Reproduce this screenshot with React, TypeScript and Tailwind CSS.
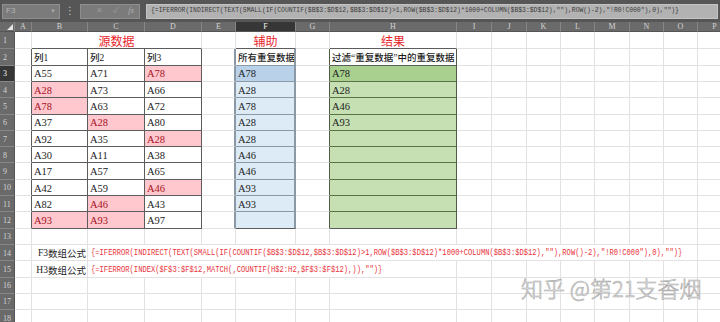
import React from 'react';

const COLS = ['A', 'B', 'C', 'D', 'E', 'F', 'G', 'H', 'I', 'J', 'K', 'L', 'M', 'N', 'O', 'P'];

const DATA: Record<string, string> = {
  B2: '列1', C2: '列2', D2: '列3', F2: '所有重复数据', H2: '过滤“重复数据”中的重复数据',
  B3: 'A55', C3: 'A71', D3: 'A78',
  B4: 'A28', C4: 'A73', D4: 'A66',
  B5: 'A78', C5: 'A63', D5: 'A72',
  B6: 'A37', C6: 'A28', D6: 'A80',
  B7: 'A92', C7: 'A35', D7: 'A28',
  B8: 'A30', C8: 'A11', D8: 'A38',
  B9: 'A17', C9: 'A57', D9: 'A65',
  B10: 'A42', C10: 'A59', D10: 'A46',
  B11: 'A82', C11: 'A46', D11: 'A43',
  B12: 'A93', C12: 'A93', D12: 'A97',
  F3: 'A78', F4: 'A28', F5: 'A78', F6: 'A28', F7: 'A28', F8: 'A46', F9: 'A46', F10: 'A93', F11: 'A93',
  H3: 'A78', H4: 'A28', H5: 'A46', H6: 'A93',
};

const PINK = new Set(['D3', 'B4', 'B5', 'C6', 'D7', 'D10', 'C11', 'B12', 'C12']);

const R_LIGHT = 'border-r border-r-[#e2e2e2]';
const R_DARK = 'border-r border-r-[#5c5c5c]';
const R_BLUE = 'border-r-2 border-r-[#8b98a6]';
const R_GREEN = 'border-r border-r-[#4f5b45]';
const B_LIGHT = 'border-b border-b-[#e2e2e2]';
const B_DARK = 'border-b border-b-[#5c5c5c]';
const B_BLUE = 'border-b border-b-[#8b98a6]';
const B_GREEN = 'border-b border-b-[#5b7146]';

const F3_FORMULA =
  '{=IFERROR(INDIRECT(TEXT(SMALL(IF(COUNTIF($B$3:$D$12,$B$3:$D$12)>1,ROW($B$3:$D$12)*1000+COLUMN($B$3:$D$12),""),ROW()-2),"!R0!C000"),0),"")}';
const H3_FORMULA = '{=IFERROR(INDEX($F$3:$F$12,MATCH(,COUNTIF(H$2:H2,$F$3:$F$12),)),"")}';

function inRows(r: number) {
  return r >= 2 && r <= 12;
}

function rightCls(r: number, c: number) {
  if (inRows(r)) {
    if (c >= 1 && c <= 3) return R_DARK;
    if (c === 0) return R_DARK;
    if (c === 4 || c === 5) return R_BLUE;
    if (c === 6 || c === 7) return R_GREEN;
  }
  return R_LIGHT;
}

function bottomCls(r: number, c: number) {
  if (r === 1) {
    if (c >= 1 && c <= 3) return B_DARK;
    if (c === 5) return B_DARK;
    if (c === 7) return B_DARK;
  }
  if (inRows(r)) {
    if (c >= 1 && c <= 3) return B_DARK;
    if (c === 5) return r === 12 ? B_DARK : B_BLUE;
    if (c === 7) return r === 2 || r === 12 ? B_DARK : B_GREEN;
  }
  return B_LIGHT;
}

function fillCls(r: number, c: number) {
  const id = COLS[c] + r;
  if (PINK.has(id)) return 'bg-[#ffc7ce] text-[#a5121d]';
  if (c === 5 && r === 3) return 'bg-[#b9d2ea] text-[#1c1c1c]';
  if (c === 5 && r >= 4 && r <= 12) return 'bg-[#ddebf7] text-[#1c1c1c]';
  if (c === 7 && r === 3) return 'bg-[#a9d08e] text-[#1c1c1c]';
  if (c === 7 && r >= 4 && r <= 12) return 'bg-[#c6e0b4] text-[#1c1c1c]';
  return 'bg-white text-[#1c1c1c]';
}

const CELL_FONT = "font-['Liberation_Serif','Noto_Sans_CJK_SC',serif]";

function Cell({ r, c }: { r: number; c: number }) {
  const id = COLS[c] + r;
  const text = DATA[id];
  const isHead = r === 2;
  return (
    <div
      className={`${rightCls(r, c)} ${bottomCls(r, c)} ${fillCls(r, c)} flex items-center overflow-hidden whitespace-nowrap pl-[2px] pt-[2px] ${CELL_FONT} ${
        isHead ? 'text-[9.5px] font-medium' : 'text-[10.5px]'
      }`}
    >
      {text}
    </div>
  );
}

function Title({ text, span }: { text: string; span: string }) {
  return (
    <div
      className={`${span} ${R_LIGHT} ${B_DARK} bg-white flex items-center justify-center pt-[1px] font-['Noto_Sans_CJK_SC',sans-serif] text-[12px] text-[#e8262b]`}
    >
      {text}
    </div>
  );
}

export default function App() {
  const cells: React.ReactNode[] = [];

  cells.push(
    <div key="corner" className="bg-[#6a6a6a] border-r border-r-[#858585] border-b border-b-[#555] flex items-end justify-end p-[1px]">
      <div className="w-0 h-0 border-l-[6px] border-l-transparent border-b-[6px] border-b-[#e6e6e6]" />
    </div>
  );
  COLS.forEach((col, i) => {
    cells.push(
      <div
        key={'h' + col}
        className={`${
          i === 5 ? 'bg-[#363636] text-[#f0f0f0]' : 'bg-[#6a6a6a] text-[#d4d4d4]'
        } border-r border-r-[#868686] border-b border-b-[#555] flex items-center justify-center font-['Liberation_Serif',serif] text-[8px] leading-none`}
      >
        {col}
      </div>
    );
  });

  for (let r = 1; r <= 18; r++) {
    cells.push(
      <div
        key={'r' + r}
        className={`${
          r === 3 ? 'bg-[#363636] text-[#f4f4f4]' : 'bg-[#6a6a6a] text-[#d4d4d4]'
        } border-r border-r-[#555] border-b border-b-[#868686] flex items-center pl-[3px] pt-[2px] font-['Liberation_Serif',serif] text-[8px] leading-none`}
      >
        {r}
      </div>
    );
    if (r === 1) {
      cells.push(<div key="A1" className={`${R_LIGHT} ${B_LIGHT}`} />);
      cells.push(<Title key="B1" text="源数据" span="col-span-3" />);
      cells.push(<div key="E1" className={`${R_LIGHT} ${B_LIGHT}`} />);
      cells.push(<Title key="F1" text="辅助" span="" />);
      cells.push(<div key="G1" className={`${R_LIGHT} ${B_LIGHT}`} />);
      cells.push(<Title key="H1" text="结果" span="" />);
      for (let c = 8; c < COLS.length; c++) cells.push(<div key={COLS[c] + r} className={`${R_LIGHT} ${B_LIGHT}`} />);
      continue;
    }
    if (r === 14 || r === 15) {
      const label = r === 14 ? 'F3' : 'H3';
      const formula = r === 14 ? F3_FORMULA : H3_FORMULA;
      cells.push(<div key={'A' + r} className={`${R_LIGHT} ${B_LIGHT}`} />);
      cells.push(
        <div
          key={'B' + r}
          className={`${R_LIGHT} ${B_LIGHT} flex items-center justify-end pr-[1px] pt-[2px] whitespace-nowrap text-[9.5px] text-[#1c1c1c] ${CELL_FONT}`}
        >
          <span className="font-['Liberation_Serif',serif]">{label}</span>
          <span className="font-['Noto_Sans_CJK_SC',sans-serif]">数组公式</span>
        </div>
      );
      cells.push(
        <div
          key={'C' + r}
          className={`${r === 14 ? 'col-span-13' : 'col-span-6'} ${R_LIGHT} ${B_LIGHT} flex items-center pl-[3px] pt-[2px] whitespace-nowrap`}
        >
          <div className="origin-left scale-x-[0.84] font-['Liberation_Mono',monospace] text-[8.5px] text-[#e8333a] leading-none">
            {formula}
          </div>
        </div>
      );
      const start = r === 14 ? 15 : 8;
      for (let c = start; c < COLS.length; c++) cells.push(<div key={COLS[c] + r} className={`${R_LIGHT} ${B_LIGHT}`} />);
      continue;
    }
    for (let c = 0; c < COLS.length; c++) cells.push(<Cell key={COLS[c] + r} r={r} c={c} />);
  }

  return (
    <div lang="zh-CN" className="relative w-[720px] h-[322px] overflow-hidden bg-white">
      <div className="h-[22px] bg-[#565656] flex items-center gap-0 pl-[2px]">
        <div className="w-[58px] h-[15px] bg-[#7b7b7b] border border-[#8e8e8e] flex items-center justify-between px-[3px]">
          <span className="font-['Liberation_Sans',sans-serif] text-[8px] text-[#b4b4b4]">F3</span>
          <span className="text-[6px] text-[#a8a8a8]">▼</span>
        </div>
        <div className="w-[20px] flex justify-center text-[10px] leading-none text-[#c8c8c8] font-['DejaVu_Sans',sans-serif]">⋮</div>
        <div className="w-[60px] h-[15px] bg-[#7b7b7b] border border-[#8e8e8e] flex items-center justify-end gap-[10px] pr-[5px] font-['Liberation_Serif',serif] text-[8px] text-[#9a9a9a]">
          <span>✕</span>
          <span>✓</span>
          <span className="italic text-[#b0b0b0]">fx</span>
        </div>
        <div className="ml-[6px] w-[572px] h-[15px] bg-[#b2b2b2] border border-[#c4c4c4] flex items-center pl-[4px] overflow-hidden whitespace-nowrap">
          <div className="origin-left scale-x-[0.85] font-['Liberation_Mono',monospace] text-[7.5px] text-[#3c3c3c] leading-none">
            {F3_FORMULA}
          </div>
        </div>
      </div>
      <div className="grid grid-cols-[15px_17px_56px_57px_57px_34px_60px_34px_127px_35px_35px_34px_34px_35px_34px_34px_34px] grid-rows-[10px_17.4px_repeat(17,16.3px)] w-[732px]">
        {cells}
      </div>
      <div className="absolute left-[521px] top-[276px] font-['Noto_Sans_CJK_SC',sans-serif] font-light text-[22px] leading-none text-[#f6f6f6] [-webkit-text-stroke:0.6px_#a8a8a8] whitespace-nowrap">
        知乎 @第21支香烟
      </div>
    </div>
  );
}
